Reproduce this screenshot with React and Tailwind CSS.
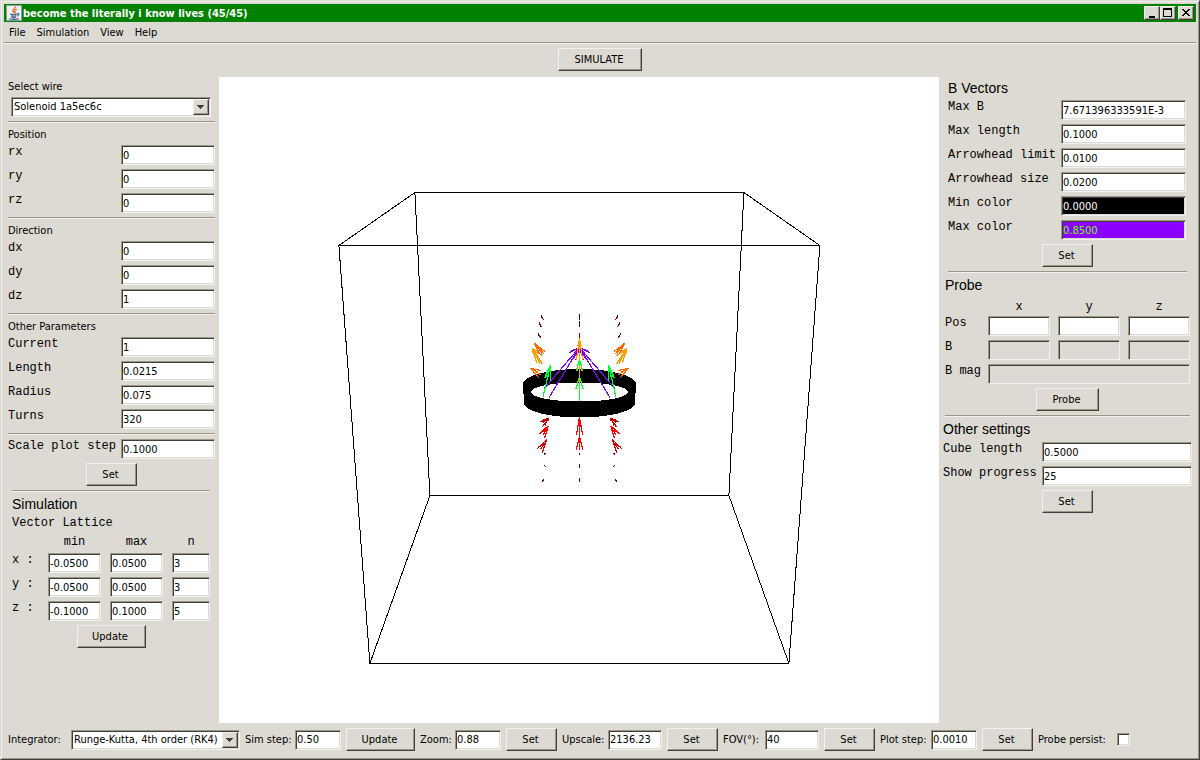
import React, { useId } from "react";

const raised =
  "border border-t-[#f3f1ed] border-l-[#f3f1ed] border-r-[#403f3a] border-b-[#403f3a] bg-[#dddad3] shadow-[inset_-1px_-1px_0_#9d9683]";
const sunken =
  "border border-t-[#9b9686] border-l-[#9b9686] border-r-[#f3f1ed] border-b-[#f3f1ed] shadow-[inset_1px_1px_0_#403f3a,inset_-1px_-1px_0_#dddad3]";
const mono = "font-['Liberation_Mono',monospace] text-[12px] leading-[14px]";
const heading = "flex items-center font-['Liberation_Sans',sans-serif] text-[14px]";

function Separator({ className = "" }) {
  return <hr className={`h-[2px] shrink-0 border-0 border-t border-b border-t-[#9b9686] border-b-[#f3f1ed] ${className}`} />;
}

function Button({ children, className = "" }) {
  return (
    <button type="button" className={`h-[23px] shrink-0 pr-[2px] ${raised} ${className}`}>
      {children}
    </button>
  );
}

function Field({ tone = "bg-white text-black", className = "", ...rest }) {
  return <input type="text" className={`block h-5 min-w-0 rounded-none pl-[1px] pr-0 outline-none ${sunken} ${tone} ${className}`} {...rest} />;
}

function LabeledField({ label, value, tone }) {
  const id = useId();
  return (
    <>
      <label htmlFor={id} className={`whitespace-nowrap ${mono}`}>
        {label}
      </label>
      <Field id={id} defaultValue={value} tone={tone} />
    </>
  );
}

function Combo({ id, options, className = "" }) {
  return (
    <div className={`relative h-5 ${className}`}>
      <select id={id} className={`block h-5 w-full appearance-none rounded-none bg-white pl-[2px] pr-5 outline-none ${sunken}`}>
        {options.map((o) => (
          <option key={o}>{o}</option>
        ))}
      </select>
      <span className={`pointer-events-none absolute top-[2px] right-[2px] flex h-4 w-4 items-center justify-center ${raised}`}>
        <svg width="8" height="4" viewBox="0 0 8 4" shapeRendering="crispEdges">
          <path d="M0 0h7v1H6v1H5v1H4v1H3V3H2V2H1V1H0z" fill="#403f3a" />
        </svg>
      </span>
    </div>
  );
}

function JavaIcon() {
  return (
    <svg width="16" height="16" viewBox="0 0 16 16" className="shrink-0">
      <rect width="16" height="16" fill="#8f9aa3" />
      <rect x="1" y="1" width="14" height="14" fill="#efeeea" />
      <path d="M9.5 1.5c.6 2-3.6 2.6-2.6 4.6.3.7.9 1 .9 1.8M10.8 4.2C9 5 8.2 5.8 9 6.9c.4.6 0 1.1-.5 1.5" fill="none" stroke="#e8762c" strokeWidth="1.4" />
      <path d="M4.2 8.9c1.800.8 5 .7 7 0M5 10.700c1.500.6 3.800.6 5.300 0M5.300 12.300c1.200.5 3.200.5 4.400 0M3 13.700c2.500 1 7.500.9 9.800-.2M11.200 8.700c2.300-.7 2.200 1.600-.2 2.300" fill="none" stroke="#41698c" strokeWidth="1.200" />
    </svg>
  );
}

function WindowButton({ label, children }) {
  return (
    <button type="button" aria-label={label} className={`flex h-[14px] w-4 items-center justify-center ${raised}`}>
      {children}
    </button>
  );
}

function TitleBar() {
  return (
    <header className="flex h-[18px] items-center bg-[#008200] pr-[2px] pl-[2px] text-white">
      <JavaIcon />
      <h1 className="ml-[1px] flex-1 truncate pt-[1px] text-[11px] font-bold">become the literally i know lives (45/45)</h1>
      <div className="flex">
        <WindowButton label="Minimize">
          <svg width="12" height="12" viewBox="0 0 12 12" shapeRendering="crispEdges">
            <path d="M3 9h6v2H3z" />
          </svg>
        </WindowButton>
        <WindowButton label="Maximize">
          <svg width="12" height="12" viewBox="0 0 12 12" shapeRendering="crispEdges">
            <path d="M1 1h9v9H1zM2 3v6h7V3z" fillRule="evenodd" />
          </svg>
        </WindowButton>
      </div>
      <div className="ml-[2px] flex">
        <WindowButton label="Close">
          <svg width="12" height="12" viewBox="0 0 12 12" shapeRendering="crispEdges">
            <path d="M2 2h2v1h1v1h2V3h1V2h2v1H9v1H8v1H7v1h1v1h1v1h1v1H8V8H7V7H5v1H4v1H2V8h1V7h1V6h1V5H4V4H3V3H2z" />
          </svg>
        </WindowButton>
      </div>
    </header>
  );
}

function MenuBar() {
  return (
    <nav className="flex h-5 items-center gap-[11px] pt-[1px] pl-[5px]">
      {["File", "Simulation", "View", "Help"].map((m) => (
        <button key={m} type="button">
          {m}
        </button>
      ))}
    </nav>
  );
}

function WireGroup({ title, rows }) {
  return (
    <section className="flex flex-col">
      <Separator className="mt-1" />
      <h2 className="flex h-[22px] items-center pt-[1px]">{title}</h2>
      <div className="grid grid-cols-[113px_1fr] gap-y-1">
        {rows.map(([l, v]) => (
          <LabeledField key={l} label={l} value={v} />
        ))}
      </div>
    </section>
  );
}

const lattice = [
  ["x", "-0.0500", "0.0500", "3"],
  ["y", "-0.0500", "0.0500", "3"],
  ["z", "-0.1000", "0.1000", "5"],
];

function LeftPanel() {
  return (
    <aside className="flex w-[215px] shrink-0 flex-col pr-1 pl-1">
      <label htmlFor="wire" className="flex h-5 items-center">
        Select wire
      </label>
      <Combo id="wire" options={["Solenoid 1a5ec6c"]} className="mr-1 ml-[3px]" />
      <WireGroup title="Position" rows={[["rx", "0"], ["ry", "0"], ["rz", "0"]]} />
      <WireGroup title="Direction" rows={[["dx", "0"], ["dy", "0"], ["dz", "1"]]} />
      <WireGroup title="Other Parameters" rows={[["Current", "1"], ["Length", "0.0215"], ["Radius", "0.075"], ["Turns", "320"]]} />
      <Separator className="mt-1" />
      <div className="mt-1 grid grid-cols-[113px_1fr]">
        <LabeledField label="Scale plot step" value="0.1000" />
      </div>
      <Button className="mt-1 w-[51px] self-center">Set</Button>
      <section className="mt-1 flex flex-col pr-[5px] pl-1">
        <Separator />
        <h2 className={`h-6 ${heading}`}>Simulation</h2>
        <h3 className={mono}>Vector Lattice</h3>
        <div className={`grid h-[23px] grid-cols-[27px_53px_53px_38px] items-center gap-x-[9px] text-center ${mono}`}>
          <span />
          <span>min</span>
          <span>max</span>
          <span>n</span>
        </div>
        <div className="grid grid-cols-[27px_53px_53px_38px] gap-x-[9px] gap-y-1">
          {lattice.map(([axis, min, max, n]) => (
            <React.Fragment key={axis}>
              <span className={`whitespace-nowrap ${mono}`}>{axis} :</span>
              <Field aria-label={`${axis} min`} defaultValue={min} />
              <Field aria-label={`${axis} max`} defaultValue={max} />
              <Field aria-label={`${axis} n`} defaultValue={n} />
            </React.Fragment>
          ))}
        </div>
        <Button className="mt-1 w-[69px] self-center">Update</Button>
      </section>
    </aside>
  );
}

function SideArrows() {
  return (
    <g>
      <path stroke="#700000" d="M93 47L101 60M87 68L95 82M84 101L92 113" />
      <path
        stroke="#8000ff"
        d="M208 143L103 265M208 143L117 293M208 143L178 158M208 143L190 176M208 146L186 168M206 144L184 153M208 146L197 180M208 152L192 172M208 148L196 158M204 143L200 170"
      />
      <path stroke="#ff9d00" d="M67 145L98 193M67 145L80 188M67 145L87 162M70 150L90 190M72 148L98 168M66 150L74 170" />
      <path stroke="#ff6a00" d="M73 130L104 154M73 130L103 163M73 130L92 166M73 130L86 140M80 136L96 160M62 205L93 212M62 205L86 233M62 205L92 224M66 208L76 222M72 208L84 218" />
      <path stroke="#00ff30" d="M121 196L99 292M121 196L103 235M121 196L122 243M121 196L112 238M118 206L106 232M105 232L116 224" />
      <path stroke="#c80000" d="M116 355L90 366M116 355L98 380M112 358L105 376M100 358L116 360M110 356L98 368" />
      <path stroke="#ff0000" d="M115 377L88 402M115 377L104 414M115 377L100 404M108 390L94 396" />
      <path stroke="#d40000" d="M110 418L80 448M110 418L96 460M108 422L102 444M104 430L84 442M106 428L92 446" />
      <path stroke="#600000" d="M107 458L103 464M103 494L107 502M101 537L98 545" />
    </g>
  );
}

function Scene() {
  return (
    <svg role="img" aria-label="Magnetic field of a solenoid" viewBox="219 77 720 646" className="block min-w-0 flex-1 bg-white" shapeRendering="crispEdges">
      <g fill="none" stroke="#000" strokeWidth="1" transform="translate(-0.6 0)">
        <path d="M415.500 192.500H744.500L729.500 495.500H430.500z" />
        <path d="M339.500 245.500H820.500L789.500 663.500H370.500z" />
        <path d="M415.500 192.500L339.500 245.500M744.500 192.500L820.500 245.500M729.500 495.500L789.500 663.500M430.500 495.500L370.500 663.500" />
      </g>
      <path
        fillRule="evenodd"
        d="M523 384A56.500 15 0 0 1 636 384L635 403A55.500 14.500 0 0 1 524 403zM531 392A48.500 9.500 0 0 0 628 392A48.500 9.500 0 0 0 531 392z"
      />
      <g transform="translate(510 300) scale(0.33333)" fill="none" strokeWidth="3.600">
        <SideArrows />
        <g transform="translate(417 0) scale(-1 1)">
          <SideArrows />
        </g>
        <path stroke="#700000" d="M208.500 42V60M208.500 64V82M208.500 100V113M208.500 459V465M208.500 492V504M208.500 535V545" />
        <path stroke="#00ff30" d="M208.500 180V303M208.500 178L199 213M208.500 178L218 213M204 190H213M208.500 230L198 266M208.500 230L219 266M204 242H213" />
        <path stroke="#ff9d00" d="M208.500 114V180M208.500 195V250M208.500 114L199 180M208.500 114L218 180M202 136H215M205 124H212" />
        <path stroke="#ff9d00" d="M203 200V214M214 200V214" />
        <path stroke="#ff0000" d="M208.500 352V450M208.500 352L199 406M208.500 352L218 406M208.500 408L199 449M208.500 408L218 449M204 376H213M204 426H213" />
      </g>
    </svg>
  );
}

const axes = ["x", "y", "z"];

function RightPanel() {
  return (
    <aside className="flex w-[257px] shrink-0 flex-col">
      <section className="flex flex-col pr-[9px] pl-[9px]">
        <h2 className={`h-[23px] pb-[2px] ${heading}`}>B Vectors</h2>
        <div className="grid grid-cols-[113px_125px] gap-y-1">
          <LabeledField label="Max B" value="7.671396333591E-3" />
          <LabeledField label="Max length" value="0.1000" />
          <LabeledField label="Arrowhead limit" value="0.0100" />
          <LabeledField label="Arrowhead size" value="0.0200" />
          <LabeledField label="Min color" value="0.0000" tone="bg-black text-white" />
          <LabeledField label="Max color" value="0.8500" tone="bg-[#8c00ff] text-[#73ff00]" />
        </div>
        <Button className="mt-1 w-[51px] self-center">Set</Button>
        <Separator className="mt-1" />
      </section>
      <section className="flex flex-col px-[6px]">
        <h2 className={`h-6 ${heading}`}>Probe</h2>
        <div className={`grid h-[19px] grid-cols-[35px_1fr_1fr_1fr] items-center gap-x-2 text-center ${mono}`}>
          <span />
          {axes.map((a) => (
            <span key={a}>{a}</span>
          ))}
        </div>
        <div className="grid grid-cols-[35px_1fr_1fr_1fr] gap-x-2 gap-y-1">
          <span className={mono}>Pos</span>
          {axes.map((a) => (
            <Field key={a} aria-label={`Position ${a}`} />
          ))}
          <span className={mono}>B</span>
          {axes.map((a) => (
            <Field key={a} aria-label={`B ${a}`} readOnly tone="bg-[#dddad3]" />
          ))}
          <label htmlFor="bmag" className={`whitespace-nowrap ${mono}`}>
            B mag
          </label>
          <Field id="bmag" readOnly tone="bg-[#dddad3]" className="col-span-3" />
        </div>
        <Button className="mt-1 w-[63px] self-center">Probe</Button>
        <Separator className="mt-1" />
      </section>
      <section className="flex flex-col px-1">
        <h2 className={`h-[25px] pb-[2px] ${heading}`}>Other settings</h2>
        <div className="grid grid-cols-[99px_1fr] gap-y-1">
          <LabeledField label="Cube length" value="0.5000" />
          <LabeledField label="Show progress" value="25" />
        </div>
        <Button className="mt-1 w-[51px] self-center">Set</Button>
      </section>
    </aside>
  );
}

function BottomItem({ label, value, action, labelClass, fieldClass, buttonClass = "w-[51px]" }) {
  const id = useId();
  return (
    <div className="flex items-center">
      <label htmlFor={id} className={`whitespace-nowrap ${labelClass}`}>
        {label}
      </label>
      <Field id={id} defaultValue={value} className={fieldClass} />
      <Button className={`ml-[5px] ${buttonClass}`}>{action}</Button>
    </div>
  );
}

function BottomBar() {
  return (
    <footer className="flex h-[33px] items-center gap-[5px] pl-1">
      <div className="flex items-center">
        <label htmlFor="integrator" className="w-[63px]">
          Integrator:
        </label>
        <Combo id="integrator" options={["Runge-Kutta, 4th order (RK4)"]} className="w-[169px]" />
      </div>
      <BottomItem label="Sim step:" value="0.50" action="Update" labelClass="w-[50px]" fieldClass="w-[46px]" buttonClass="w-[69px]" />
      <BottomItem label="Zoom:" value="0.88" action="Set" labelClass="w-[35px]" fieldClass="w-[46px]" />
      <BottomItem label="Upscale:" value="2136.23" action="Set" labelClass="w-[46px]" fieldClass="w-[54px]" />
      <BottomItem label="FOV(°):" value="40" action="Set" labelClass="w-[42px]" fieldClass="w-[54px]" />
      <BottomItem label="Plot step:" value="0.0010" action="Set" labelClass="w-[51px]" fieldClass="w-[46px]" />
      <div className="flex items-center">
        <label htmlFor="persist" className="w-[79px] whitespace-nowrap">
          Probe persist:
        </label>
        <input id="persist" type="checkbox" className={`h-[13px] w-[13px] appearance-none bg-white ${sunken}`} />
      </div>
    </footer>
  );
}

export default function App() {
  return (
    <div className="flex min-h-screen flex-col border border-t-[#dddad3] border-r-[#403f3a] border-b-[#403f3a] border-l-[#dddad3] bg-[#dddad3] p-[3px] font-['DejaVu_Sans_Condensed','DejaVu_Sans',sans-serif] text-[11px] leading-[14px] text-black shadow-[inset_1px_1px_0_#f3f1ed,inset_-1px_-1px_0_#9b9686]">
      <TitleBar />
      <MenuBar />
      <Separator />
      <div className="flex h-[33px] items-start justify-center pt-1">
        <Button className="h-6 w-[84px]">SIMULATE</Button>
      </div>
      <main className="flex flex-1">
        <LeftPanel />
        <Scene />
        <RightPanel />
      </main>
      <BottomBar />
    </div>
  );
}
